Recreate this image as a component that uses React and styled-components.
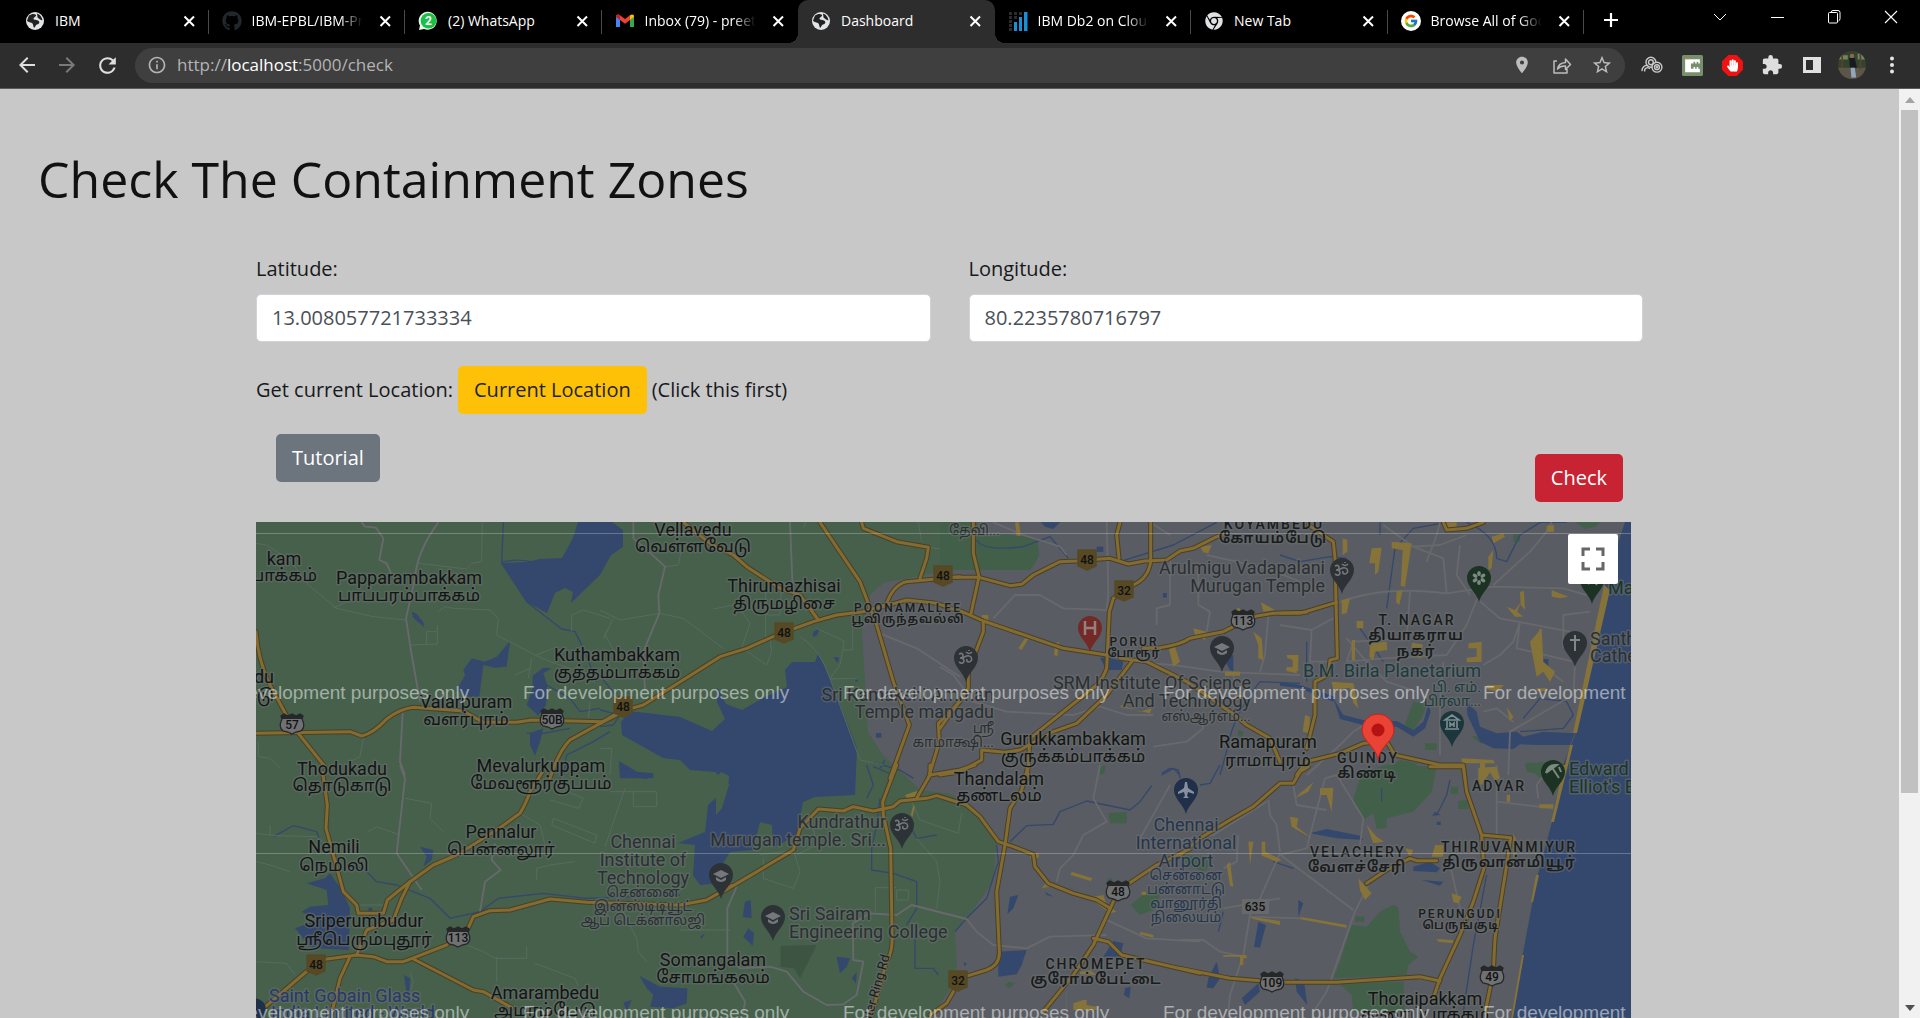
import React from "react";
import styled, { createGlobalStyle } from "styled-components";
import { FaGithub, FaChrome, FaHandPaper } from "react-icons/fa";
import { FcGoogle } from "react-icons/fc";
import { MdExtension, MdStarBorder, MdLocationOn, MdRefresh, MdArrowBack, MdArrowForward, MdInfoOutline } from "react-icons/md";

const UI = `"Open Sans", "Noto Sans", sans-serif`;
const MAP_FONT = `Roboto, "Noto Sans Tamil", "Noto Sans", sans-serif`;

const GlobalStyle = createGlobalStyle`
  *, *::before, *::after { box-sizing: border-box; }
  body { margin: 0; font-family: ${UI}; background: #c8c8c8; }
  button { font-family: inherit; border: 0; padding: 0; background: none; cursor: pointer; }
`;

const Window = styled.div`
  display: flex;
  flex-direction: column;
  height: 100vh;
  overflow: hidden;
`;

/* ---------- browser frame ---------- */

const TabStrip = styled.header`
  display: flex;
  flex: none;
  height: 43px;
  padding: 0 1px 0 12px;
  background: #000;
`;

const Tabs = styled.div`
  display: flex;
  flex: 1;
  min-width: 0;
`;

const Tab = styled.div`
  position: relative;
  display: flex;
  flex: 1 1 0;
  min-width: 0;
  align-items: center;
  gap: 10px;
  padding: 0 10px 2px 13px;
  color: #fff;
  background: ${(p) => (p.$active ? "#2d2d2d" : "transparent")};
  border-radius: 10px 10px 0 0;

  &::after {
    content: "";
    position: absolute;
    right: 0;
    top: 10px;
    width: 1px;
    height: 24px;
    background: ${(p) => (p.$divider ? "#4a4a4a" : "transparent")};
  }
`;

const TabFoot = styled.span`
  position: absolute;
  bottom: 0;
  width: 10px;
  height: 10px;
  ${(p) => (p.$side === "left" ? "left: -10px;" : "right: -10px;")}
  background: radial-gradient(
    circle at ${(p) => (p.$side === "left" ? "0 0" : "100% 0")},
    transparent 10px,
    #2d2d2d 10px
  );
`;

const Favicon = styled.span`
  display: flex;
  flex: none;
  justify-content: center;
  width: 20px;
`;

const TabTitle = styled.span`
  flex: 1;
  overflow: hidden;
  white-space: nowrap;
  font-size: 14px;
  line-height: 20px;
  mask-image: ${(p) => (p.$long ? "linear-gradient(90deg, #000 78%, transparent 98%)" : "none")};
`;

const CloseButton = styled.button`
  display: flex;
  flex: none;
  align-items: center;
  justify-content: center;
  width: 20px;
  height: 20px;
  color: #fff;
`;

const NewTab = styled.button`
  flex: none;
  width: 54px;
  margin-right: 53px;
  color: #fff;
`;

const WindowButton = styled.button`
  flex: none;
  width: 57px;
  padding-bottom: 6px;
  color: #fff;
`;

const Toolbar = styled.nav`
  display: flex;
  flex: none;
  align-items: center;
  height: 46px;
  padding: 0 8px 1px 7px;
  background: #2d2d2d;
  border-bottom: 1px solid #5a5a5a;
`;

const ToolButton = styled.button`
  display: flex;
  flex: none;
  align-items: center;
  justify-content: center;
  width: 40px;
  height: 35px;
  color: ${(p) => p.$color || "#dedede"};
`;

const AddressBar = styled.div`
  display: flex;
  flex: 1;
  align-items: center;
  height: 35px;
  margin: 0 7px 0 8px;
  padding: 0 3px 0 12px;
  border-radius: 18px;
  background: #3f3f3f;
  color: #b4b4b4;
`;

const Url = styled.div`
  flex: 1;
  padding-left: 10px;
  font-size: 17px;
  line-height: 24px;
  white-space: nowrap;

  b { font-weight: 400; color: #fff; }
`;

/* ---------- page ---------- */

const Viewport = styled.div`
  display: flex;
  flex: 1;
  min-height: 0;
`;

const Page = styled.main`
  display: flex;
  flex: 1;
  flex-direction: column;
  min-width: 0;
  color: #17191c;
  font-size: 20px;
  line-height: 30px;
`;

const Title = styled.h1`
  margin: 0;
  padding: 60px 38px 45px;
  color: #111;
  font-size: 50px;
  font-weight: 400;
  line-height: 60px;
`;

const Content = styled.section`
  display: flex;
  flex: 1;
  flex-direction: column;
  min-height: 0;
  padding: 0 256px;
`;

const Fields = styled.div`
  display: grid;
  grid-template-columns: 1fr 1fr;
  gap: 38px;
`;

const Field = styled.div`
  display: flex;
  flex-direction: column;
  gap: 10px;
`;

const TextInput = styled.input`
  width: 100%;
  height: 48px;
  padding: 0 15px 2px;
  border: 1px solid #ced4da;
  border-radius: 5px;
  background: #fff;
  color: #495057;
  font: 20px/30px ${UI};
`;

const LocationRow = styled.div`
  display: flex;
  align-items: center;
  gap: 5px;
  padding: 24px 0 20px;
`;

const ActionButton = styled.button`
  height: 48px;
  padding: 0 16px;
  border-radius: 5px;
  background: ${(p) => p.$bg};
  color: ${(p) => p.$fg || "#fff"};
  font-size: 20px;
  line-height: 30px;
  align-self: ${(p) => p.$align || "auto"};
`;

const Actions = styled.div`
  display: flex;
  justify-content: space-between;
  height: 68px;
  margin-bottom: 20px;
  padding: 0 20px;
`;

const MapPane = styled.div`
  position: relative;
  flex: 1;
  min-height: 0;
  margin-right: 12px;
  overflow: hidden;
  background: #46604c;

  svg { display: block; }
`;

const FullscreenButton = styled.button`
  position: absolute;
  top: 12px;
  right: 13px;
  display: flex;
  align-items: center;
  justify-content: center;
  width: 50px;
  height: 50px;
  border-radius: 2px;
  background: #fff;
`;

const ScrollTrack = styled.div`
  display: flex;
  flex: none;
  flex-direction: column;
  width: 21px;
  background: #f1f1f1;
`;

const ScrollArrow = styled.button`
  display: flex;
  align-items: center;
  justify-content: center;
  height: 21px;
`;

const ScrollThumb = styled.div`
  flex: 1;
  margin: 0 2px;
  background: linear-gradient(#c1c1c1, #c1c1c1) no-repeat 0 0 / 100% 77%;
`;

/* ---------- icons ---------- */

const Svg = ({ s = 20, children, ...rest }) => (
  <svg width={s} height={s} viewBox="0 0 20 20" aria-hidden="true" {...rest}>{children}</svg>
);

const Globe = () => (
  <Svg>
    <circle cx="10" cy="10" r="9" fill="#e3e4e5" />
    <path d="M4 4.500C6 3 9 2.500 10.500 3.500 12.500 5 9 6 8.500 7.500 8 9 11 8.500 13 9.500 15.500 11 14 13 12 13.500 10.500 14 10.500 16 9 17 8 15 8.500 13 7 12 5 11 2.500 11 2 9.500Z" fill="#202224" />
    <path d="M12 2.600C15 3.500 17.300 6.500 17.300 9.500L15 8.500 12.500 6.500Z" fill="#202224" />
  </Svg>
);

const WhatsAppBadge = () => (
  <Svg>
    <path d="M1 19 2 14.500A9 9 0 1 1 6 18Z" fill="#e8f7ec" />
    <circle cx="10.500" cy="9.700" r="7.800" fill="#19c044" />
    <text x="10.500" y="14" textAnchor="middle" fontSize="12" fontWeight="700" fill="#fff" fontFamily="Roboto">2</text>
  </Svg>
);

const Gmail = () => (
  <Svg>
    <path d="M1 5v11h4V8.500z" fill="#4285f4" />
    <path d="M15 8.500V16h4V5z" fill="#34a853" />
    <path d="M1 5.500V4.500Q3 2.500 5 4.200L10 8 15 4.200V9L10 12.800 5 9Z" fill="#ea4335" />
    <path d="M1 5.500V4.500Q3 2.500 5 4.200V9L1 6Z" fill="#c5221f" />
    <path d="M15 4.200Q17.500 2.500 19 4.500V6L15 9Z" fill="#fbbc04" />
  </Svg>
);

const Db2 = () => (
  <Svg>
    <g fill="#2c2c2f">
      {[1, 5, 9, 13].map((y) => <rect key={y} x="1" y={y} width="3" height="3" />)}
      <rect x="1" y="17" width="3" height="3" /><rect x="6" y="1" width="3" height="3" />
      <rect x="6" y="5" width="3" height="3" /><rect x="11" y="1" width="3" height="3" />
    </g>
    <g fill="#1b8fd6"><rect x="6" y="11" width="3" height="9" /><rect x="11" y="6" width="3" height="14" /><rect x="16" y="1" width="3.500" height="19" /></g>
  </Svg>
);

const GoogleBadge = () => (
  <Svg><circle cx="10" cy="10" r="10" fill="#fff" /><FcGoogle x="2.500" y="2.500" size="15" /></Svg>
);

const Stroke = ({ d, w = 2, s = 20 }) => (
  <Svg s={s} fill="none" stroke="currentColor" strokeWidth={w} strokeLinejoin="round"><path d={d} /></Svg>
);

const CloudExt = () => (
  <Svg s={22} fill="none" stroke="#c9c9c9" strokeWidth="1.300">
    <circle cx="9" cy="7.500" r="4.500" /><circle cx="9" cy="7.500" r="2.200" />
    <path d="M1 15.500a4.500 4.500 0 0 1 5.500-5M3.500 16a2.600 2.600 0 0 1 4.500-2.500" />
    <circle cx="14.500" cy="12" r="4.500" fill="#2d2d2d" /><circle cx="14.500" cy="12" r="2.200" /><circle cx="14.500" cy="12" r="0.500" />
  </Svg>
);

const CExt = () => (
  <Svg s={21}>
    <rect width="20" height="20" rx="1.500" fill="#76906e" />
    <path d="M3 4h14v4h-1.500V6.500H14V8h-1.500V6.500H11V8H8.500v5H11v-1.500h1.500V13H14v-1.500h1.500V13H17v3.500H3Z" fill="#fff" />
    <path d="M4 3.500h3" stroke="#d8763a" />
  </Svg>
);

const HandExt = () => (
  <Svg s={21}>
    <path d="M6 0h8l6 6v8l-6 6H6l-6-6V6Z" fill="#ed1313" />
    <FaHandPaper x="4" y="4" size="12" color="#fff" />
  </Svg>
);

const SidePanel = () => (
  <Svg s={20}><path d="M1 2h18v16H1zM4 5v10h7V5z" fill="#e0e0e0" fillRule="evenodd" /></Svg>
);

const Avatar = () => (
  <Svg s={28}>
    <clipPath id="avatarClip"><circle cx="10" cy="10" r="10" /></clipPath>
    <g clipPath="url(#avatarClip)">
      <rect width="20" height="20" fill="#33442d" />
      <path d="M0 3h7v3H0zM14 2h6v4h-6z" fill="#71855e" /><path d="M0 12h20v8H0z" fill="#5d5547" />
      <path d="M3 0v12M16 0v13" stroke="#594033" strokeWidth="1.200" />
      <circle cx="10" cy="3.600" r="1.600" fill="#8a6654" />
      <path d="M8 5h4l1.500 7h-5Z" fill="#171a20" /><path d="M9 12h3l1 7H9.500Z" fill="#8fa5c0" />
    </g>
  </Svg>
);

const TABS = [
  { title: "IBM", icon: <Globe />, divider: true },
  { title: "IBM-EPBL/IBM-Project", icon: <FaGithub size={20} color="#22272c" />, divider: true, long: true },
  { title: "(2) WhatsApp", icon: <WhatsAppBadge />, divider: true },
  { title: "Inbox (79) - preethi", icon: <Gmail />, long: true },
  { title: "Dashboard", icon: <Globe />, active: true },
  { title: "IBM Db2 on Cloud", icon: <Db2 />, divider: true, long: true },
  { title: "New Tab", icon: <FaChrome size={18} color="#dfe1e3" />, divider: true },
  { title: "Browse All of Google", icon: <GoogleBadge />, divider: true, long: true },
];

/* ---------- map data ---------- */

/* Each sheet is digitised at three units per map pixel, from its own corner. */
const SHEETS = [
  {
    at: [250, 515],
    water: [
      "M780 378 770 455 735 458 700 450 688 545H650L620 525 645 480 640 465 665 430 705 440 740 425Z",
      "M485 290 500 296 520 322 522 337 490 308Z",
      "M848 482 880 458 905 460 880 475 892 510 888 570 865 602 830 570 848 520Z",
      "M840 655 880 640 870 680 855 722 840 690Z",
    ],
    stream: "M760 22 755 145 830 260 935 342 975 350 1000 400 1040 500M755 142Q800 130 840 140M890 510 960 550 990 590 1050 580M830 655 880 655 960 640M1080 650 1030 680 990 700 950 720 940 780",
    street: "M335 22 345 35 378 38 400 70 388 135 410 145 425 180M565 22Q500 110 495 190L468 310 485 420 510 560M458 590 450 740 465 780",
    lane: "M18 85 50 90 120 135 175 210 260 280 370 305 468 315M505 145 650 162 665 145 695 140 697 22M565 290 585 275 610 280 720 285 745 310 740 360 855 420 900 440 1080 500M482 390 562 387V330M530 388V350H560M845 430 835 490M855 422 910 400M795 480 840 460M25 680V725L60 730 90 760M340 670 330 725 300 740M965 350V300L1000 285 1080 310M1075 340 1060 370M1020 560 1015 610M250 280 330 240",
    road: ["M0 655 300 650 335 663Q370 655 410 612 450 582 490 577L640 588 700 622 800 622 845 615 1060 620 1120 590", "M18 350Q25 440 60 510L125 630 225 755", "M1060 620 960 675Q925 710 900 790"],
  },
  {
    at: [600, 515],
    water: ["M640 350 660 340 650 362 638 365Z", "M700 425 718 428 712 445Z", "M828 654h16v14h-16z", "M766 494h8v6h-8z", "M57 738 110 770 160 775V790H60Z"],
    stream: "M0 585 60 600 40 630 0 635M0 480 30 520 60 560M820 742 900 765 940 790M820 755 880 780M855 735 840 760",
    street: "M100 22V70L130 95 195 155 175 240 178 295 130 410 135 530M570 22 578 220M840 355 950 400 1080 485",
    lane: "M0 285 60 315 178 295 250 310 370 400M40 310 15 360 50 420M340 282 410 268 450 325 425 400M497 230V380M497 300H540L545 200M600 365Q660 400 690 490L780 735 850 750M690 492 770 490M650 340 732 378 728 405H758V330L780 335M728 405 720 450 690 490M430 400 470 430 500 450 515 410 510 370M195 155 235 150 245 100M965 80 955 22M985 97 1080 110M617 22 610 38M0 700 35 700 30 780",
    road: ["M0 625 60 590 130 570 210 520 360 425 440 400 530 360 640 320 710 300 790 290 870 265", "M250 22 330 85 400 120 440 155 540 220 600 240 655 315", "M660 22 780 200 830 330 880 500 928 630 870 790", "M785 22 790 40 890 80 985 97 980 130 960 190", "M860 265Q880 210 920 200L1080 185", "M830 280 920 255 1010 265 1090 292", "M1080 560 1015 625 1018 680 985 790"],
  },
  {
    at: [940, 515],
    green: ["M0 20H110L120 60 200 58 290 70 298 120 270 165H0Z", "M895 645 910 650 905 670 893 660Z"],
    water: ["M480 430 500 425 550 440 545 465 500 465Z", "M303 22H360L340 42 315 35Z", "M470 95h20v16h-20z", "M669 234h11v14h-11z", "M850 430 880 420 880 470 870 465Z"],
    stream: "M110 75Q130 110 250 95L330 65 385 130M540 140 700 90 830 22M1080 505 960 500Q880 600 865 690L840 780M665 780 700 760 720 780",
    street: "M500 22 505 230 500 290M690 135 690 270 650 280 650 330M160 310 225 240 300 240 370 280 500 285M0 455 40 480 100 560 200 590 400 600 480 575 560 600 640 600M640 695 740 680 790 640 780 600M560 440 700 450 840 470 950 475 1080 480M985 300 975 420 960 470M880 480 890 540M160 22 250 60 360 95 380 120M775 150 775 270 810 290 800 350M800 120 980 160 1080 200M630 22 690 60",
    road: ["M100 22V115L117 185 92 300", "M40 187H117L210 212 245 208 280 180 360 140 410 138 510 130 565 147 615 138 680 135 720 108 760 100 830 65 850 60", "M540 22 530 60 537 130", "M632 22V140", "M632 140Q625 190 580 210L520 250 508 290 500 460Q490 490 470 510L270 670 262 790", "M55 285 130 318 370 400 500 420", "M610 400 660 398Q720 390 750 370L850 350 880 335 950 303 1000 295 1100 292", "M540 430 620 440 740 500 870 590 920 630 990 670 1020 740", "M575 440 500 540 410 625 340 650 240 705 195 712 125 705V735L60 770 0 780", "M130 320V350L85 470V520L0 640"],
    patch: "M235 400 255 370 265 372 245 405ZM345 385 358 380 352 424 342 420ZM685 395 700 380 720 440 700 455ZM780 95 815 90 805 115 790 112ZM940 350 965 370 970 435 955 430 955 390ZM1035 465 1075 468V420H1040L1042 430 1065 435V452ZM885 540h20v14h-20zM540 575 630 595 635 580 600 590 545 570ZM890 280h10v20h-10zM963 262 1005 285 970 290ZM125 300h20v18h-20zM225 22h12l5 40h-12zM760 340 800 350 795 375 765 360ZM855 470h45v12h-45z",
  },
  {
    at: [1280, 515],
    green: ["M370 640 400 560 440 570 425 610 400 645Z", "M360 735 410 745 410 780H300V770Z", "M735 745 810 740 800 780 740 770Z", "M700 58h20v22h-20zM435 685h35v20h-35zM575 665 615 660 605 688Z", "M885 22H960L945 35 915 42Z"],
    water: ["M560 560 590 590 600 635 650 655 710 650 730 665 790 650 885 655 870 690 780 690 720 688 700 702 640 700 600 680 562 600Z", "M0 500 60 510 165 545 160 560 60 520 0 512Z", "M160 550 190 600 270 620 350 618 400 645 430 620 445 570 452 590 435 640 400 665 350 635 270 635 180 612Z", "M780 432h25v28h-25z"],
    stream: "M0 120 60 140 150 125 200 130M320 280 345 100 400 40 500 22M560 22Q650 60 650 130L680 140 720 60 780 22 860 22M730 610 780 550 860 560 880 600 850 640 720 650M80 380V500M240 340 310 440M300 22V60",
    street: "M172 265Q300 210 500 235L640 215 850 220 920 240M640 210 750 110 800 50 815 22M590 250 660 310 740 325 870 350M590 255 560 330 540 360 500 420 310 430 200 440M400 95 490 130 500 235M200 440 220 380 380 370 390 230M490 440 480 560V720M885 450 880 540 690 650 685 780M310 30 400 95 480 90 560 60M720 320 710 400 880 440M720 320 700 380 660 420 610 450M850 400V300L930 290M540 90 530 180 570 240M0 330 95 345 160 310M95 345 90 440 170 440M610 590 650 580 700 620M80 780 180 690 220 650 300 600M200 370 260 440 320 500 410 530M480 22 470 60 440 140M780 340 770 440 850 500",
    patch: "M188 70 202 75V110L188 120ZM275 100 305 98 295 170 285 180 285 145 268 145ZM335 80 395 85 375 215 362 213 368 105 335 100ZM490 22 500 45 530 38V22ZM800 32 822 30V50L800 52ZM635 65 670 55 675 65 640 85ZM270 385 320 380 322 405 285 410 280 435 268 425ZM395 383 428 388 425 430 412 428 412 402 395 398ZM565 385 605 380V440L560 442V428L590 425V400H565ZM750 380 785 340 790 440 825 470 810 500 790 470 770 485ZM680 275 705 285 722 262 712 290 730 305 705 305ZM720 230 732 228 735 285 722 270ZM815 225 865 245 840 250 815 245ZM20 420 55 425 50 475 20 468V455L38 458V436ZM155 500 220 505 235 580 220 565 210 518 160 525ZM620 510 672 510 650 530 620 522ZM770 520h30v8h-30zM680 575 700 605 690 618ZM185 255 210 250 200 295 185 298ZM75 600 90 605 88 655 68 650ZM545 730 640 735 645 745H615V770H600V745H545ZM230 318h20v22h-20zM350 230 368 225 358 270 348 262ZM215 375h10v60h-10zM625 125 640 105 635 160 625 165Z",
    road: ["M85 30 160 80 165 130 172 430 150 435 145 480 105 500V600L80 700", "M0 295H60L170 262", "M490 22 500 45 560 40 610 22", "M50 780 80 740 180 715 250 685 320 680 345 720 480 750 550 750 555 790"],
  },
  {
    at: [250, 765],
    water: ["M240 325 275 375 300 430 296 555 200 550 180 545 135 490 205 465 155 440 180 425 235 420 230 375 170 355 225 340Z", "M510 245 550 255 545 285 520 305 530 275Z", "M1105 0 1140 20 1200 30 1190 42 1120 30Z", "M1168 632 1230 665 1312 670 1310 715 1270 730 1200 725 1210 690 1190 670Z", "M462 630 480 640 478 710 470 690Z", "M1120 712 1145 705 1130 740Z", "M1350 515 1365 505 1355 522Z", "M355 428h12v12h-12zM395 428h14v12h-14z"],
    stream: "M70 215 130 182 200 200 215 240M290 300 340 310 380 350 440 360 540 400 600 460 690 440 745 400 880 385 1010 400 1290 390M950 0 930 40",
    street: "M450 0 465 40 440 265 515 375M735 235 725 285 752 315 705 350 690 440",
    lane: "M18 205 80 212 200 215 240 250M60 180V210M355 200 380 185 450 210M465 100 545 115 540 160 580 200M810 145 870 180 885 240M910 160 1040 210 1035 235 905 180ZM940 75 1000 100 985 130 900 105M1125 70 1065 245M1150 80H1220V125H1150ZM1080 80 1150 80M330 420H405V438M650 540 700 560 735 580H830V545M740 575V650M855 595 975 640 985 665M20 290 60 300 120 320M18 590 110 595 135 630M860 345V310L900 300 975 290M1290 495H1440M1120 440 1160 520 1165 560 1190 590M480 620 490 650 480 680",
    road: ["M218 22 232 120 228 190 250 270 280 380 320 420 325 445 400 445 412 405 480 350 550 300 620 270 740 195 810 145Q830 110 840 80L878 20", "M480 350 455 400 430 465 350 495 320 570", "M210 585 320 570 370 575 410 590H460L500 575 590 540 650 500 670 455 720 437 780 435 900 402 1010 412 1290 420 1370 405 1445 362", "M175 615 40 730", "M300 575 270 640 245 745", "M490 582 670 675 700 680 785 728"],
  },
  {
    at: [720, 765],
    green: ["M1165 145 1220 140V175H1170Z", "M1232 420 1280 380 1320 380 1310 430 1260 450Z", "M865 650 885 655 870 670 855 662Z", "M1140 5 1158 2 1152 25 1140 30Z", "M1160 345 1175 338 1180 350 1165 358Z"],
    dark: "M182 542 290 540 240 640 222 610 182 605Z",
    water: ["M835 560 920 555 905 600 890 628 835 635Z", "M75 410 92 405 95 460 68 455Z", "M85 490 102 505 98 542 70 515Z", "M870 395 895 390 880 430 862 448Z", "M1180 528 1210 535 1200 575 1150 575Z", "M1215 670 1232 665 1228 700 1212 690Z", "M350 575 390 580 380 605 360 625ZM395 640 410 620 408 655ZM975 380 1000 395 980 390ZM730 592 740 595 735 605Z"],
    stream: "M830 240 835 290 800 400 740 460 705 500M870 230 920 182 1000 178 1020 140 1100 108 1230 135 1260 110 1295 62M1325 25 1350 10 1375 15 1380 40M480 100 470 180 455 250 455 315 520 325 590 350 590 430 560 480M440 0 460 60 440 100M585 480V610H640L655 630M570 180 590 220 650 210",
    street: "M50 365 22 430 22 570 60 610 150 605 200 620 250 680 320 720 370 718 410 690 430 590 400 585 398 475 450 445 530 450 575 420 740 462 770 500 820 540 920 550 990 515 1160 510M1140 0 1120 100 1160 170 1090 210 1060 270 1020 310 1010 350M40 650 75 710 70 740M1150 460 1280 520 1440 530M1350 60 1260 220",
    lane: "M590 220 650 290 660 350 650 430M570 100 600 165 715 205 725 145M120 270 220 255 240 320 220 370 130 340V280M230 270 290 240 280 190M466 440V368H530M530 375H565V405H530ZM1040 680V740",
    patch: "M555 90 590 78 605 95 560 100ZM580 120 585 125 578 155 572 150ZM1055 320 1117 340 1112 348 1052 330ZM1120 395 1150 390 1160 420 1190 440 1170 445 1130 415ZM965 370 985 345 1000 362ZM1260 500 1300 510 1300 518 1260 508ZM1080 620 1110 615 1130 630 1080 628ZM1060 715 1090 705H1100V720L1130 725V735H1060ZM930 265h26v14h-26zM1265 390h14v-10h-14z",
    road: ["M530 0 488 110 490 150 512 250 516 500Q520 560 500 590L455 750", "M0 385 60 350 220 255 240 190 295 132 370 138 400 125 460 138 520 125 540 108 620 100 650 92 740 120 780 155 835 230 880 245 940 268 945 305 985 355 1060 385 1130 405 1170 430", "M590 100 630 30V0M630 30 720 15 765 0", "M925 0 905 75 870 130 855 240 830 380 838 560Q840 600 800 615L745 632", "M700 680 680 715 630 750", "M1410 252 1310 300 1220 360", "M1180 410 1120 540 1060 630 970 740", "M1120 520 1165 530 1205 570 1440 625"],
  },
  {
    at: [1180, 765],
    green: ["M545 22 620 0 770 5 755 80 700 140 620 160V188L590 192 580 145 550 165 520 105Z", "M640 420 655 425 660 500 690 560 715 575 685 600 680 630 460 640 480 590 515 480 560 485 600 440Z", "M480 658 670 650 675 740H520L515 690Z", "M1040 0H1100L1080 40Z", "M812 65h22v22h-22zM835 108 865 105V132H835Z", "M525 455h28v15h-28z", "M10 270 85 275 90 300 70 320 20 300Z"],
    water: ["M390 205 440 192 540 212 550 225 470 220Z", "M700 305 750 290 780 310 770 322 700 318Z", "M725 345 790 350 780 362Z", "M235 470 258 480 240 548 222 545Z", "M85 640 110 590 120 640 100 670 80 668Z", "M345 640 372 650 382 720 350 680Z", "M185 700 235 655 240 680 195 720Z", "M355 405 370 415 355 455Z", "M770 170h12v10h-12zM765 140 782 150 757 152Z"],
    stream: "M920 330 880 540 850 740M810 45 800 90 770 150M605 70V110M130 440 115 500M60 60 90 55 120 0M280 290 340 310",
    street: "M265 105 270 150 290 180 300 260M295 265 520 435M300 265 240 400 210 450 190 570 150 690 145 740M565 360 525 440 440 680 400 740M470 30 550 160 540 240M950 0 950 210M950 110 1120 130M435 40 380 250 300 270M0 525H70L120 560 190 575M130 430 300 400M210 455 360 460 500 485M340 60 350 120 440 135M435 40 470 30M810 300 840 430M1075 100 1070 60 1100 20M175 210 170 290 130 310M0 225 100 210 260 110",
    patch: "M360 85 400 52 385 80 345 100ZM420 70 460 68 455 140 440 90 420 90ZM330 155 355 160 350 185 395 220 335 185ZM560 180 590 215 612 230 580 235ZM205 230 220 230 210 300ZM245 230H256V260L305 285 290 290 245 272ZM150 290 160 365 150 362 140 300ZM895 8 950 5 960 40 945 48 930 22 905 60 895 55ZM815 385 845 395 835 415 820 412ZM770 522 820 525 818 535 775 530ZM535 340 575 385 555 405 540 375ZM210 455 300 468V480L220 462ZM360 455 500 480 498 488 365 463ZM130 570H200V580H190V600H180V575H130ZM765 240H790V275H755ZM1000 205 1015 240 1000 285ZM675 250 700 255 690 275ZM980 90h10v20h-10zM1078 118h42v12h-42z",
    road: ["M0 270 60 220 150 165 220 125 300 55H340L360 20 385 5", "M750 5H850L860 80 905 210 992 218 980 300 945 520 940 620 915 745", "M905 215 912 310 880 410 840 510 780 640 760 700", "M560 355 620 315 690 280 710 287H770", "M0 610 150 640 300 652H470L720 635 780 648"],
  },
];

const ROUTE_SHIELDS = [
  ["57", 292, 725, "us"], ["50B", 552, 720, "us"], ["48", 784, 633, "nh"], ["48", 623, 707, "nh"],
  ["48", 943, 576, "nh"], ["48", 1087, 560, "nh"], ["32", 1124, 591, "nh"], ["113", 1243, 621, "us"],
  ["113", 458, 938, "us"], ["48", 316, 965, "nh"], ["32", 958, 981, "nh"], ["48", 1118, 892, "us"],
  ["635", 1255, 907, "box"], ["109", 1272, 983, "us"], ["49", 1492, 977, "us"],
];

const INK = { town: "#131514", poi: "#2b2f34", air: "#26344f", sight: "#1b3a40", park: "#1c3626", firm: "#28386a" };

/* text, x, baseline, size, anchor, ink */
const P = (t, x, y, ta, tay, a = "middle") => [[t, x, y, 18, a, "town"], [ta, x, tay, 17, a, "town"]];
const LABELS = [
  ...P("kam", 284, 565, "பாக்கம்", 581),
  ...P("Papparambakkam", 409, 584, "பாப்பரம்பாக்கம்", 601),
  ...P("Vellavedu", 693, 536, "வெள்ளவேடு", 552),
  ...P("Thirumazhisai", 784, 592, "திருமழிசை", 609),
  ...P("Kuthambakkam", 617, 661, "குத்தம்பாக்கம்", 678),
  ...P("du", 274, 683, "டு", 701, "end"),
  ...P("Valarpuram", 466, 708, "வளர்புரம்", 725),
  ...P("Thodukadu", 342, 775, "தொடுகாடு", 791),
  ...P("Mevalurkuppam", 541, 772, "மேவளூர்குப்பம்", 789),
  ...P("Pennalur", 501, 838, "பென்னலூர்", 855),
  ...P("Nemili", 334, 853, "நெமிலி", 871),
  ...P("Sriperumbudur", 364, 927, "ஸ்ரீபெரும்புதூர்", 945),
  ...P("Amarambedu", 545, 999, "அமரம்பேடு", 1016),
  ...P("Somangalam", 713, 966, "சோமங்கலம்", 983),
  ...P("Gurukkambakkam", 1073, 745, "குருக்கம்பாக்கம்", 762),
  ...P("Thandalam", 999, 785, "தண்டலம்", 801),
  ...P("Ramapuram", 1268, 748, "ராமாபுரம்", 766),
  ...P("Thoraipakkam", 1425, 1005, "துரைப்பாக்கம்", 1020),
  ["Saint Gobain Glass", 269, 1002, 18, "start", "firm"],
  ["India Limited - World", 271, 1019, 18, "start", "firm"],
  ["Chennai", 643, 848, 18, "middle", "poi"],
  ["Institute of", 643, 866, 18, "middle", "poi"],
  ["Technology", 643, 884, 18, "middle", "poi"],
  ["சென்னை", 643, 897, 14, "middle", "poi"],
  ["இன்ஸ்டிடியூட்", 643, 911, 14, "middle", "poi"],
  ["ஆப் டெக்னாலஜி", 643, 925, 14, "middle", "poi"],
  ["Sri Sairam", 789, 920, 18, "start", "poi"],
  ["Engineering College", 789, 938, 18, "start", "poi"],
  ["Kundrathur", 886, 828, 18, "end", "poi"],
  ["Murugan temple. Sri...", 886, 846, 18, "end", "poi"],
  ["Sri Kamakshi Amman", 994, 701, 18, "end", "poi"],
  ["Temple mangadu", 994, 718, 18, "end", "poi"],
  ["ஸ்ரீ", 994, 733, 14, "end", "poi"],
  ["காமாக்ஷி...", 994, 747, 14, "end", "poi"],
  ["SRM Institute Of Science", 1251, 689, 18, "end", "poi"],
  ["And Technology", 1251, 707, 18, "end", "poi"],
  ["எஸ்ஆர்எம்...", 1251, 721, 14, "end", "poi"],
  ["தேவி...", 1000, 535, 14, "end", "poi"],
  ["Arulmigu Vadapalani", 1325, 574, 18, "end", "poi"],
  ["Murugan Temple", 1325, 592, 18, "end", "poi"],
  ["B.M. Birla Planetarium", 1481, 677, 18, "end", "sight"],
  ["பி. எம்.", 1481, 692, 14, "end", "sight"],
  ["பிர்லா...", 1481, 706, 14, "end", "sight"],
  ["Edward", 1569, 775, 18, "start", "park"],
  ["Elliot's Beach", 1569, 793, 18, "start", "park"],
  ["Santhome", 1590, 645, 18, "start", "poi"],
  ["Cathedral", 1590, 662, 18, "start", "poi"],
  ["Marina", 1608, 594, 18, "start", "park"],
  ["Chennai", 1186, 831, 18, "middle", "air"],
  ["International", 1186, 849, 18, "middle", "air"],
  ["Airport", 1186, 867, 18, "middle", "air"],
  ["சென்னை", 1186, 880, 14, "middle", "air"],
  ["பன்னாட்டு", 1186, 894, 14, "middle", "air"],
  ["வானூர்தி", 1186, 908, 14, "middle", "air"],
  ["நிலையம்", 1186, 922, 14, "middle", "air"],
];

/* text, x, baseline, size */
const DISTRICTS = [
  ["POONAMALLEE", 908, 612, 12], ["PORUR", 1134, 646, 12], ["KOYAMBEDU", 1274, 529, 14],
  ["T. NAGAR", 1417, 625, 14], ["GUINDY", 1368, 763, 14], ["ADYAR", 1499, 791, 14],
  ["VELACHERY", 1358, 857, 14], ["THIRUVANMIYUR", 1509, 852, 14], ["PERUNGUDI", 1460, 918, 12],
  ["CHROMEPET", 1096, 969, 14],
];
const DISTRICTS_TAMIL = [
  ["பூவிருந்தவல்லி", 908, 623, 12], ["போரூர்", 1134, 657, 12], ["கோயம்பேடு", 1273, 543, 15],
  ["தியாகராய", 1416, 640, 15], ["நகர்", 1416, 656, 15], ["கிண்டி", 1367, 778, 15],
  ["வேளச்சேரி", 1357, 872, 15], ["திருவான்மியூர்", 1509, 867, 15], ["பெருங்குடி", 1461, 929, 12],
  ["குரோம்பேட்டை", 1096, 984, 15],
];

const Cap = <path d="M-8-1 0-5 8-1 0 3ZM-5 2V5Q0 9 5 5V2L0 5Z" fill="#75797c" />;
const Om = <path d="M-7-4Q-3-6-3-2-3 0-6 0-2 0-2 3-3 7-7 4M-3 0Q2-4 5-1 7 3 3 4 0 4 1 1M0-6Q3-3 6-6M3-8v1" fill="none" stroke="#75797c" strokeWidth="1.600" />;
const PINS = [
  [966, 658, "#2d3236", Om], [1342, 570, "#2d3236", Om], [902, 825, "#2d3236", Om],
  [1222, 648, "#2d3236", Cap], [721, 875, "#2d3236", Cap], [773, 917, "#2d3236", Cap],
  [1090, 628, "#732a27", <path d="M-5-7V7M5-7V7M-5 0H5" stroke="#94817f" strokeWidth="2.500" />],
  [1479, 578, "#1c3324", <g fill="#7c8a80">{[0, 60, 120, 180, 240, 300].map((r) => <ellipse key={r} cy="-4.500" rx="1.800" ry="2.600" transform={`rotate(${r})`} />)}</g>],
  [1575, 643, "#2d3236", <path d="M0-8V8M-5-3H5" stroke="#80868a" strokeWidth="2" />],
  [1452, 723, "#1b373c", <path d="M-7-3 0-8 7-3ZM-5-2V5M5-2V5M-7 6H7M-2 4V0L0 2 2 0V4" fill="none" stroke="#7e8f92" strokeWidth="1.600" />],
  [1186, 790, "#202f4a", <path d="M-1-8H1L2-2 8 2V4L2 2 1 6 3 8H-3L-1 6-2 2-8 4V2L-2-2Z" fill="#8790a0" />],
  [1553, 772, "#1c3324", <path d="M-7 1Q-5-8 4-7L-7 1M0-3 6 6M6-5l2 5" stroke="#7c8a80" strokeWidth="2" fill="#7c8a80" />],
  [1592, 580, "#1c3324", <path d="M-4 4 3 0M1 0 5 5" stroke="#7c8a80" strokeWidth="2" />],
  [254, 1010, "#202f4a", null],
];

function Shield({ label, x, y, kind }) {
  return (
    <g transform={`translate(${x} ${y})`}>
      {kind === "nh" && <path d="M-9-10H9V6L4 8 0 10-4 8-9 6Z" fill="#564924" stroke="#564924" strokeWidth="1.500" strokeLinejoin="round" />}
      {kind === "box" && <rect x="-13" y="-8" width="27" height="15" fill="#67696b" />}
      {kind === "us" && (
        <>
          <path d="M-11-9-8-11-4-9 0-11 4-9 8-11 11-9 10-6Q14 2 9 6L4 7 0 9-4 7-9 6Q-14 2-10-6Z" fill="#707173" stroke="#252729" strokeWidth="1.300" />
          <path d="M-11-9-8-11-4-9 0-11 4-9 8-11 11-9 10-6H-10Z" fill="#252729" />
        </>
      )}
      <text y="4" fontSize="12" fontWeight="500" textAnchor="middle" fill="#101112">{label}</text>
    </g>
  );
}

function MapDrawing() {
  const at = (s) => `translate(${s.at[0]} ${s.at[1]}) scale(${1 / 3})`;
  return (
    <svg width="100%" height="100%" viewBox="256 522 1375 496" preserveAspectRatio="xMinYMin slice" fontFamily={MAP_FONT} role="img" aria-label="Map of Chennai">
      <path d="M977 522 980 535 1037 540 1038 558 1030 570 950 570 883 583 870 595 862 632 865 682 868 732 883 755 897 768 920 790 950 794 967 802 997 838 993 882 967 918 955 932 957 965 953 985 930 1018H1640V522Z" fill="#595c62" />
      <path d="M1625 522 1603 590 1575 735 1563 765 1552 822 1537 878 1522 958 1511 1018H1640V522Z" fill="#34486d" />
      <path d="M1604 585 1573 733H1577L1610 590ZM1570 745 1551 822H1554L1573 745ZM1536 875 1531 902H1533L1539 875ZM1522 955 1511 1018H1513L1524 955ZM1563 765 1552 822H1554L1566 765Z" fill="#85733a" />
      <g fill="#34486d">
        <path d="M578 522 573 538 562 558 540 559 527 562 502 563 527 602 547 613 555 593 565 588 573 592 571 603 600 575 611 555 623 547V530L612 522Z" />
        <path d="M621 722 630 711 680 717 712 731 725 719 717 702V687L726 704 742 710 763 698 787 687 785 670 792 662 815 662 818 653 830 678 857 748 855 795 815 797 803 802 797 835 773 848 772 825 760 822 753 850 730 852 720 868 712 884 700 885 693 875 695 845 678 843 705 832 708 805 730 785 715 772 690 770 680 760 663 758 622 735Z" />
      </g>
      <path d="M721 772 729 776 728 788 722 808 716 815V778Z" fill="#46604c" />
      {SHEETS.map((s, i) => (
        <g key={i} transform={at(s)} fill="none" strokeLinejoin="round">
          {s.green && s.green.map((d) => <path key={d} d={d} fill="#425f49" />)}
          {s.dark && <path d={s.dark} fill="#3d5443" />}
          {s.water.map((d) => <path key={d} d={d} fill="#34486d" />)}
          <path d={s.stream} stroke="#34486d" strokeWidth="4" />
          {s.lane && <path d={s.lane} stroke="#596a5f" strokeWidth="3" />}
          <path d={s.street} stroke="#68696c" strokeWidth="5.500" />
          {s.patch && <path d={s.patch} fill="#85733a" />}
        </g>
      ))}
      {["#4a4024", "#836b32"].map((c, pass) => SHEETS.map((s, i) => (
        <g key={c + i} transform={at(s)} fill="none" stroke={c} strokeWidth={pass ? 9 : 15} strokeLinejoin="round" strokeLinecap="round">
          {s.road.map((d) => <path key={d} d={d} />)}
        </g>
      )))}
      {ROUTE_SHIELDS.map(([label, x, y, kind]) => <Shield key={label + x} label={label} x={x} y={y} kind={kind} />)}
      {PINS.map(([x, y, color, glyph]) => (
        <g key={x} transform={`translate(${x} ${y})`}>
          <path d="M0 24C-2 15-12 9-12 0A12 12 0 1 1 12 0C12 9 2 15 0 24Z" fill={color} />
          {glyph}
        </g>
      ))}
      <g stroke="#6b706e" strokeOpacity="0.550" strokeWidth="3" paintOrder="stroke" strokeLinejoin="round">
        {LABELS.map(([t, x, y, size, anchor, ink]) => (
          <text key={t + x + y} x={x} y={y} fontSize={size} textAnchor={anchor} fill={INK[ink]}>{t}</text>
        ))}
        {DISTRICTS.map(([t, x, y, size]) => (
          <text key={t} x={x} y={y} fontSize={size} fontWeight="500" letterSpacing="2" textAnchor="middle" fill="#1a1c1e">{t}</text>
        ))}
        {DISTRICTS_TAMIL.map(([t, x, y, size]) => (
          <text key={t} x={x} y={y} fontSize={size} fontWeight="600" letterSpacing="1" textAnchor="middle" fill="#1a1c1e">{t}</text>
        ))}
        <text transform="translate(868 1032) rotate(-74)" fontSize="13" fill="#1a1c1e">Outer Ring Rd</text>
      </g>
      <path d="M256 533.500H1631M256 853.500H1631" stroke="#fff" strokeOpacity="0.250" />
      <g fill="#fff" fillOpacity="0.500" fontFamily='"Liberation Sans", Arial, sans-serif' fontSize="19">
        {[699, 1019].map((y) => [203, 523, 843, 1163, 1483].map((x) => (
          <text key={`${x}-${y}`} x={x} y={y}>For development purposes only</text>
        )))}
      </g>
      <path d="M1378 760C1376 746 1362 741 1362 730A16 16 0 1 1 1394 730C1394 741 1380 746 1378 760Z" fill="#ea4335" stroke="#c5221f" />
      <circle cx="1378" cy="730" r="6.500" fill="#b31412" />
    </svg>
  );
}

export default function App() {
  return (
    <Window>
      <GlobalStyle />
      <TabStrip>
        <Tabs>
          {TABS.map((t) => (
            <Tab key={t.title} $active={t.active} $divider={t.divider}>
              {t.active && <><TabFoot $side="left" /><TabFoot $side="right" /></>}
              <Favicon>{t.icon}</Favicon>
              <TabTitle $long={t.long}>{t.title}</TabTitle>
              <CloseButton aria-label={`Close ${t.title}`}><Stroke s={20} w={2} d="M5.500 5.500l9.500 9.500M15 5.500l-9.500 9.500" /></CloseButton>
            </Tab>
          ))}
        </Tabs>
        <NewTab aria-label="New tab"><Stroke w={2.2} d="M10 3v14M3 10h14" /></NewTab>
        <WindowButton aria-label="Search tabs"><Stroke w={1} d="M4 7l6 6 6-6" /></WindowButton>
        <WindowButton aria-label="Minimize"><Stroke w={1} d="M4 10.500h13" /></WindowButton>
        <WindowButton aria-label="Restore"><Stroke w={1} d="M4.500 6.500q0-1 1-1h7q1 0 1 1v8.500q0 1-1 1h-7q-1 0-1-1zM7 5.500q0-2 2-2h5q2 0 2 2v6q0 2-1.500 2.500" /></WindowButton>
        <WindowButton aria-label="Close window"><Stroke w={1.1} d="M4 4l12 12M16 4L4 16" /></WindowButton>
      </TabStrip>

      <Toolbar>
        <ToolButton aria-label="Back"><MdArrowBack size={24} /></ToolButton>
        <ToolButton aria-label="Forward" $color="#7a7a7a"><MdArrowForward size={24} /></ToolButton>
        <ToolButton aria-label="Reload"><MdRefresh size={25} /></ToolButton>
        <AddressBar>
          <MdInfoOutline size={20} />
          <Url>http://<b>localhost</b>:5000/check</Url>
          <ToolButton aria-label="Location access" $color="#bdbdbd"><MdLocationOn size={20} /></ToolButton>
          <ToolButton aria-label="Share" $color="#bdbdbd"><Stroke w={1.5} d="M5 6H2v12h13v-4M5.500 14q1-6 8-6.500V4l5 5.500-5 5V11q-5-.5-8 3z" /></ToolButton>
          <ToolButton aria-label="Bookmark" $color="#bdbdbd"><MdStarBorder size={22} /></ToolButton>
        </AddressBar>
        <ToolButton aria-label="Cloud extension"><CloudExt /></ToolButton>
        <ToolButton aria-label="Clipboard extension"><CExt /></ToolButton>
        <ToolButton aria-label="Ad blocker"><HandExt /></ToolButton>
        <ToolButton aria-label="Extensions"><MdExtension size={22} /></ToolButton>
        <ToolButton aria-label="Side panel"><SidePanel /></ToolButton>
        <ToolButton aria-label="Profile"><Avatar /></ToolButton>
        <ToolButton aria-label="Menu"><Svg fill="#e6e6e6"><circle cx="10" cy="3.500" r="2" /><circle cx="10" cy="10" r="2" /><circle cx="10" cy="16.500" r="2" /></Svg></ToolButton>
      </Toolbar>

      <Viewport>
        <Page>
          <Title>Check The Containment Zones</Title>
          <Content>
            <Fields>
              <Field>
                <label htmlFor="latitude">Latitude:</label>
                <TextInput id="latitude" defaultValue="13.008057721733334" />
              </Field>
              <Field>
                <label htmlFor="longitude">Longitude:</label>
                <TextInput id="longitude" defaultValue="80.2235780716797" />
              </Field>
            </Fields>
            <LocationRow>
              <span>Get current Location:</span>
              <ActionButton $bg="#ffc107" $fg="#212529">Current Location</ActionButton>
              <span>(Click this first)</span>
            </LocationRow>
            <Actions>
              <ActionButton $bg="#6c757d" $align="flex-start">Tutorial</ActionButton>
              <ActionButton $bg="#c82333" $align="flex-end">Check</ActionButton>
            </Actions>
            <MapPane>
              <MapDrawing />
              <FullscreenButton aria-label="Toggle fullscreen view">
                <svg width="24" height="24" viewBox="0 0 24 24" fill="none" stroke="#666" strokeWidth="3" aria-hidden="true">
                  <path d="M2 9V2H9M15 2H22V9M22 15V22H15M9 22H2V15" />
                </svg>
              </FullscreenButton>
            </MapPane>
          </Content>
        </Page>
        <ScrollTrack>
          <ScrollArrow aria-label="Scroll up"><svg width="10" height="6" viewBox="0 0 10 6"><path d="M0 6 5 0 10 6Z" fill="#a3a3a3" /></svg></ScrollArrow>
          <ScrollThumb />
          <ScrollArrow aria-label="Scroll down"><svg width="10" height="6" viewBox="0 0 10 6"><path d="M0 0 5 6 10 0Z" fill="#505050" /></svg></ScrollArrow>
        </ScrollTrack>
      </Viewport>
    </Window>
  );
}
